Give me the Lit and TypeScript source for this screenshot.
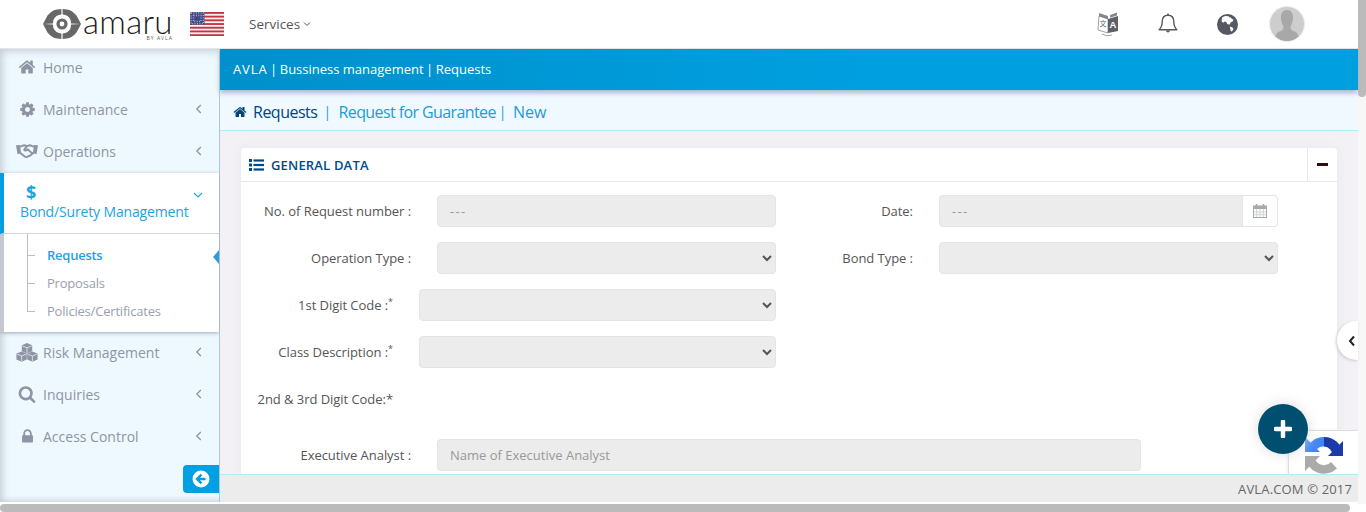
import { LitElement, html, css, svg } from "lit";
import { customElement } from "lit/decorators.js";

const FA = (d: string, size = 16) => html`<svg class="fa" width=${size} height=${size} viewBox="0 0 1792 1792"><path fill="currentColor" d=${d}></path></svg>`;
const HOME = "M1472 992v480q0 26-19 45t-45 19h-384v-384h-256v384h-384q-26 0-45-19t-19-45v-480q0-1 .5-3t.5-3l575-474 575 474q1 2 1 6zm223-69l-62 74q-8 9-21 11h-3q-13 0-21-7l-692-577-692 577q-12 8-24 7-13-2-21-11l-62-74q-8-10-7-23.5t11-21.5l719-599q32-26 76-26t76 26l244 204v-195q0-14 9-23t23-9h192q14 0 23 9t9 23v408l219 182q10 8 11 21.5t-7 23.5z";
const COG = "M1152 896q0-106-75-181t-181-75-181 75-75 181 75 181 181 75 181-75 75-181zm512-109v222q0 12-8 23t-20 13l-185 28q-19 54-39 91 35 50 107 138 10 12 10 25t-9 23q-27 37-99 108t-94 71q-12 0-26-9l-138-108q-44 23-91 38-16 136-29 186-7 28-36 28h-222q-14 0-24.5-8.5t-11.5-21.5l-28-184q-49-16-90-37l-141 107q-10 9-25 9-14 0-25-11-126-114-165-168-7-10-7-23 0-12 8-23 15-21 51-66.5t54-70.5q-27-50-41-99l-183-27q-13-2-21-12.5t-8-23.5v-222q0-12 8-23t19-13l186-28q14-46 39-92-40-57-107-138-10-12-10-24 0-10 9-23 26-36 98.5-107.5t94.5-71.5q13 0 26 10l138 107q44-23 91-38 16-136 29-186 7-28 36-28h222q14 0 24.5 8.5t11.5 21.5l28 184q49 16 90 37l142-107q9-9 24-9 13 0 25 10 129 119 165 170 7 8 7 22 0 12-8 23-15 21-51 66.5t-54 70.5q26 50 41 98l183 28q13 2 21 12.5t8 23.5z";
const SEARCH = "M1216 832q0-185-131.5-316.5t-316.5-131.5-316.5 131.5-131.5 316.5 131.5 316.5 316.5 131.5 316.5-131.5 131.5-316.5zm512 832q0 52-38 90t-90 38q-54 0-90-38l-343-342q-179 124-399 124-143 0-273.5-55.5t-225-150-150-225-55.5-273.5 55.5-273.5 150-225 225-150 273.5-55.5 273.5 55.5 225 150 150 225 55.5 273.5q0 220-124 399l343 343q37 37 37 90z";
const LOCK = "M640 768h512v-192q0-106-75-181t-181-75-181 75-75 181v192zm832 96v576q0 40-28 68t-68 28h-960q-40 0-68-28t-28-68v-576q0-40 28-68t68-28h32v-192q0-184 132-316t316-132 316 132 132 316v192h32q40 0 68 28t28 68z";

const handshake = html`<svg width="23" height="16" viewBox="0 0 23 16"><g fill="none" stroke="currentColor" stroke-width="2" stroke-linejoin="round" stroke-linecap="round"><path d="M4.5 3.5 L8.5 2 L11.5 3 L14.5 2 L18.5 3.5"/><path d="M4.5 10 L9.5 14 Q11.5 15 12.5 13.5 L14.5 13 L18 10"/><path d="M11.5 3 L8.5 6.8 Q10 8.5 12 6.2 L17 10.5"/></g><path fill="currentColor" d="M0 2 L4 1.6 L5.4 10 L1.6 11.4 Z M23 2 L19 1.6 L17.6 10 L21.4 11.4 Z"/></svg>`;
const cubes = html`<svg width="22" height="19" viewBox="0 0 22 19"><g fill="currentColor"><path d="M11 0 L16.2 2.2 V8.2 L11 10.4 L5.8 8.2 V2.2 Z"/><path d="M5.6 8.4 L10.8 10.6 V16.6 L5.6 18.8 L.4 16.6 V10.6 Z"/><path d="M16.4 8.4 L21.6 10.6 V16.6 L16.4 18.8 L11.2 16.6 V10.6 Z"/></g><g fill="none" stroke="#f0f9ff" stroke-width=".7"><path d="M6.2 2.8 L11 4.8 L15.8 2.8 M11 4.8V10"/><path d="M.8 11 L5.6 13 L10.4 11 M5.6 13V18.4"/><path d="M11.6 11 L16.4 13 L21.2 11 M16.4 13V18.4"/></g></svg>`;
const chevL = html`<svg class="chev" width="8" height="10" viewBox="0 0 8 10"><path d="M5.8 1 L1.8 5 L5.8 9" fill="none" stroke="currentColor" stroke-width="1.3"/></svg>`;
const chevD = html`<svg class="chev" width="10" height="8" viewBox="0 0 10 8"><path d="M1 2 L5 6 L9 2" fill="none" stroke="currentColor" stroke-width="1.1"/></svg>`;
const chevS = html`<svg class="chev" width="8" height="6" viewBox="0 0 8 6"><path d="M1 1.5 L4 4.5 L7 1.5" fill="none" stroke="currentColor" stroke-width="1"/></svg>`;

const flag = html`<svg width="34" height="24" viewBox="0 0 34 24"><rect width="34" height="24" rx="1.5" fill="#f4f1f2"/>${[0,1,2,3,4,5,6].map(i=>svg`<rect y=${i*3.7} width="34" height="1.85" fill="#c8323f"/>`)}<rect width="14.5" height="12.8" fill="#3f4a84"/><rect x="1" y="1" width="12.5" height="10.8" fill="none" stroke="#aab0cf" stroke-width="1.6" stroke-dasharray="1 1.4"/><rect x="3.5" y="3.5" width="7.5" height="6" fill="none" stroke="#aab0cf" stroke-width="1.4" stroke-dasharray="1 1.4"/></svg>`;

const logo = html`<svg width="38" height="30" viewBox="0 0 38 30"><path fill="#686868" fill-rule="evenodd" d="M0 15 L4.5 6.5 Q9 1 14 .4 L18.4 0 V5.4 Q12.6 5.8 10.4 11 L10 14.6 L0 15 L10 15.4 L10.4 19 Q12.6 24.2 18.4 24.6 V30 L14 29.6 Q9 29 4.5 23.5 Z M19.6 0 V5.4 Q25.4 5.8 27.6 11 L28 14.6 L38 15 L28 15.4 L27.6 19 Q25.4 24.2 19.6 24.6 V30 L24 29.6 Q29 29 33.5 23.5 L38 15 L33.5 6.5 Q29 1 24 .4 Z"/><circle cx="19" cy="15" r="4" fill="none" stroke="#686868" stroke-width="3.2"/></svg>`;

const translateIcon = html`<svg width="24" height="26" viewBox="0 0 24 26"><path d="M3 5 L12 8 V22 L2 19 Z" fill="#fff" stroke="#8a8a8a" stroke-width=".8"/><path d="M12 8 L22 5 V20 L12 22 Z" fill="#5e6066"/><path d="M12 8 L3 5 V2 L12 5 Z M14 4 L21 1.5 V4.6 L14 6.8 Z" fill="#5e6066" opacity=".75"/><text x="17" y="17" text-anchor="middle" font-size="9.5" font-weight="700" font-family="Liberation Sans" fill="#fff">A</text><text x="7" y="15" text-anchor="middle" font-size="7" font-family="Noto Sans CJK SC" fill="#666">文</text><path d="M6 23 Q11 26 16 24" fill="none" stroke="#8a8a8a" stroke-width=".8"/></svg>`;
const bell = html`<svg width="20" height="22" viewBox="0 0 20 22"><path d="M10 2.2 C6 2.2 4.2 5 4.2 8.6 C4.2 12.8 3.2 14.8 1.2 16.8 H18.8 C16.8 14.8 15.8 12.8 15.8 8.6 C15.8 5 14 2.2 10 2.2 Z" fill="#fff" stroke="#555860" stroke-width="1.4" stroke-linejoin="round"/><path d="M10 .5 V2.2" stroke="#555860" stroke-width="1.6"/><path d="M7.6 17.4 Q10 21.5 12.4 17.4 Z" fill="#555860"/></svg>`;
const globe = html`<svg width="21" height="21" viewBox="0 0 21 21"><circle cx="10.5" cy="10.5" r="10.5" fill="#555860"/><path fill="#fff" d="M5 3.6 L8 2 L11.6 2.2 L12.6 3.6 L14 3.4 L14.8 5 L16.6 5.4 L15.6 7.6 L13.6 8.6 L12.8 10.6 L10.4 10.2 L9.4 8.2 L7.6 7.4 L6.2 8.8 L4.6 7.4 Z M12.8 12.6 L15.6 13.4 L16.4 15.4 L14.8 17.6 L13.8 17 L13.2 14.8 Z"/></svg>`;
const avatar = html`<svg width="36" height="36" viewBox="0 0 36 36"><circle cx="18" cy="18" r="17.5" fill="#cdcdcd" stroke="#ececec" stroke-width="1"/><clipPath id="av"><circle cx="18" cy="18" r="17"/></clipPath><path clip-path="url(#av)" fill="#a8a8a8" d="M18 4 C13.4 4 11.8 8 12 12 C12.2 15.6 13.4 19 14.6 20.6 C14.8 23 13.6 24.4 10.4 25.6 C7.6 26.8 6 28.6 5.6 36 H30.4 C30 28.6 28.4 26.8 25.6 25.6 C22.4 24.4 21.2 23 21.4 20.6 C22.6 19 23.8 15.6 24 12 C24.2 8 22.6 4 18 4 Z"/></svg>`;
const recaptcha = html`<svg width="38" height="38" viewBox="0 0 38 38"><path d="M19 0 A19 19 0 0 1 38 17 L36.5 19 H27.5 A9 9 0 0 0 19 9.6 Z" fill="#1c3aa9"/><path d="M38 4 V19 H23 Z" fill="#1c3aa9"/><path d="M19 0 A19 19 0 0 0 0.4 15 L10.4 15 A9 9 0 0 1 19 9.6 Z" fill="#4285f4"/><path d="M0 0 L15 15 H0 Z" fill="#4285f4"/><path d="M0 19 H9.6 A9.4 9.4 0 0 0 26 25 L32 31.5 A19 19 0 0 1 0 19 Z" fill="#ababab"/><path d="M0 19 V34 L15 19 Z" fill="#ababab"/></svg>`;

type MenuItem = { label: string; icon: unknown; chev?: boolean };
const before: MenuItem[] = [
  { label: "Home", icon: FA(HOME, 18) },
  { label: "Maintenance", icon: FA(COG, 17), chev: true },
  { label: "Operations", icon: handshake, chev: true },
];
const after: MenuItem[] = [
  { label: "Risk Management", icon: cubes, chev: true },
  { label: "Inquiries", icon: FA(SEARCH, 18), chev: true },
  { label: "Access Control", icon: FA(LOCK, 17), chev: true },
];

@customElement("app-root")
export class AppRoot extends LitElement {
  static styles = css`
    :host { display: block; width: 1366px; height: 512px; overflow: hidden; background: #fff;
      font-family: "Open Sans", "Liberation Sans", sans-serif; font-size: 13px; color: #555; }
    * { box-sizing: border-box; }
    .fa { display: block; }
    .top { display: flex; height: 504px; }
    .page { width: 1358px; height: 502px; display: flex; flex-direction: column; }
    .vbar { width: 8px; background: #f7f7f7; }
    .vthumb { height: 97px; background: #bbb; border-radius: 0 0 4px 4px; }
    .hbar { height: 8px; background: #fff; }
    .hthumb { width: 1350px; height: 8px; background: #bbb; border-radius: 4px; }

    header { height: 49px; flex: none; display: flex; align-items: center; border-bottom: 1px solid #e6e6e6; background: #fff; padding-left: 43px; }
    .brand { display: flex; align-items: center; width: 147px; gap: 2px; }
    .word { position: relative; height: 38px; padding-top: 1px; }
    .amaru { display: block; font-family: "Lato", sans-serif; font-weight: 300; font-size: 33px; line-height: 31px; color: #1c1c1c; letter-spacing: .3px; }
    .by { display: block; text-align: right; font-size: 5px; line-height: 6px; letter-spacing: 1px; color: #555; margin-top: -2px; }
    .flag { display: flex; width: 59px; }
    .services { display: flex; align-items: center; gap: 3px; font-size: 13.5px; color: #555; font-weight: 500; }
    .tools { margin-left: auto; display: flex; align-items: center; }
    .tools > div { display: flex; justify-content: center; }
    .t1 { width: 24px; margin-right: 38px; }
    .t2 { width: 20px; margin-right: 39px; }
    .t3 { width: 21px; margin-right: 31px; }
    .t4 { width: 36px; margin-right: 53px; }

    .body { flex: 1; display: flex; min-height: 0; position: relative; }
    aside { width: 220px; flex: none; background: #eef9ff; box-shadow: inset 6px 6px 8px -4px #c3cbd4, inset -1px 0 0 #a9c9d8, inset 0 -5px 6px -4px #c3cbd4; display: flex; flex-direction: column; position: relative; }
    .item { height: 42px; display: flex; align-items: center; color: #8e94a3; font-size: 14px; padding: 0 17px 2px 16px; }
    .item:first-child { height: 40px; padding-bottom: 4px; }
    .ic { width: 27px; display: flex; justify-content: center; flex: none; padding-right: 5px; }
    .lbl { flex: 1; white-space: nowrap; }
    .chev { display: block; flex: none; }
    .active-block { background: #fff; box-shadow: 0 1px 4px #9fa8b4; margin-right: 1px; border-left: 4px solid #c5c8d0; }
    .active-head { height: 61px; background: #fff; margin-left: -4px; border-left: 4px solid #00a0e3; border-bottom: 1px solid #d4d4d8; padding: 10px 16px 0 16px; position: relative; color: #1ba3e3; font-size: 14px; letter-spacing: -.15px; }
    .dollar { font-weight: 700; font-size: 18px; line-height: 18px; width: 22px; text-align: center; }
    .bond { line-height: 20px; margin-top: 1px; white-space: nowrap; }
    .active-head .chev { position: absolute; right: 16px; top: 18px; }
    .sub { height: 98px; position: relative; padding: 7px 0 0 23px; }
    .tree { width: 8px; height: 78px; border-left: 1px solid #b9bcc4; position: absolute; left: 23px; top: 0; }
    .tick { position: absolute; left: 0; width: 7px; height: 1px; background: #b9bcc4; }
    .sub-item { height: 28px; line-height: 28px; padding-left: 20px; color: #9a9fac; font-weight: 500; font-size: 13px; letter-spacing: -.2px; white-space: nowrap; }
    .sub-item.on { color: #1ba3e3; font-weight: 600; letter-spacing: -.25px; }
    .arrow { position: absolute; right: 0; top: 16px; width: 0; height: 0; border: 7px solid transparent; border-right: 6px solid #2e9cd8; border-left: 0; }
    .collapse { position: absolute; right: 1px; top: 416px; width: 36px; height: 28px; background: #00a0e3; border-radius: 4px 0 0 4px; display: flex; align-items: center; justify-content: center; }

    main { flex: 1; min-width: 0; display: flex; flex-direction: column; position: relative; }
    .bluebar { height: 41px; flex: none; background: linear-gradient(100deg, #0090cc, #00a0e0 60%); color: #fff; font-size: 13px; display: flex; align-items: center; padding: 0 0 2px 13px; box-shadow: 0 3px 5px #a5b9cc; position: relative; z-index: 2; white-space: nowrap; }
    .avla { letter-spacing: .9px; }
    .bsep { margin: 0 2.5px; }
    .crumbs { height: 41px; flex: none; background: #f0f9ff; border-bottom: 1px solid #b9e6f9; display: flex; align-items: center; padding: 3px 0 0 13px; font-size: 16px; letter-spacing: -.6px; color: #1b9cd8; white-space: nowrap; }
    .crumbs .home { color: #00447c; margin-right: 6px; }
    .crumbs .root { color: #00447c; letter-spacing: -.5px; }
    .crumbs .new { letter-spacing: 0; }
    .csep { font-size: 14px; margin: 0 8px 0 6px; }
    .csep.b { margin: 0 7px 0 3px; }
    .content { flex: 1; min-height: 0; background: #f3f1f5; padding: 17px 21px 0; overflow: hidden; position: relative; }
    .card { background: #fff; border-radius: 4px 4px 0 0; height: 400px; box-shadow: 0 0 10px #e9e6ea; }
    .card-head { height: 34px; display: flex; align-items: center; border-bottom: 1px solid #e8e8e8; padding-left: 8px; color: #004a8c; font-weight: 600; font-size: 13px; letter-spacing: .18px; }
    .list { margin-right: 7px; display: block; }
    .minus { margin-left: auto; width: 30px; height: 33px; border-left: 1px solid #e6e6e6; display: flex; align-items: center; justify-content: center; }
    .minus span { width: 11px; height: 3px; background: #3a0a0a; display: block; }
    .form { padding-top: 13px; }
    .row { display: flex; align-items: center; height: 32px; margin-bottom: 15px; }
    .row.far { margin-bottom: 24px; }
    label { text-align: right; flex: none; font-size: 13px; letter-spacing: -.05px; color: #555; white-space: nowrap; }
    .l170 { width: 170px; margin-right: 26px; }
    .l152 { width: 152px; margin-right: 26px; }
    .l137 { width: 137px; margin-right: 26px; }
    sup { font-size: 9px; line-height: 0; }
    input, select { height: 32px; background: #ececec; border: 1px solid #e4e4e4; border-radius: 4px; font: inherit; font-size: 13px; color: #777; padding: 0 12px; outline: none; flex: none; }
    input::placeholder { color: #999; opacity: 1; }
    input.dash { letter-spacing: 1.3px; }
    select { color: #555; padding: 0 8px; }
    .w339 { width: 339px; }
    .w357 { width: 357px; }
    .w704 { width: 704px; }
    .date { display: flex; width: 339px; flex: none; }
    .date input { width: 304px; border-radius: 4px 0 0 4px; }
    .addon { width: 35px; height: 32px; border: 1px solid #e4e4e4; border-left: 0; border-radius: 0 4px 4px 0; background: #fff; display: flex; align-items: center; justify-content: center; }
    .recap { position: absolute; right: 0; top: 299px; width: 70px; height: 60px; background: #fff; border: 1px solid #dcdcdc; border-right: 0; padding: 6px 0 0 16px; box-shadow: -1px 0 3px #eee; }
    .tab { position: absolute; right: 0; top: 272px; width: 21px; height: 39px; background: #fff; border-radius: 20px 0 0 20px; box-shadow: -1px 1px 3px #ccc; display: flex; align-items: center; justify-content: flex-end; padding-right: 2px; color: #222; z-index: 3; }
    .fab { position: absolute; left: 1038px; top: 355px; width: 50px; height: 50px; border-radius: 50%; background: #004f71; z-index: 3; display: flex; align-items: center; justify-content: center; box-shadow: 0 0 14px #ddd; }
    footer { height: 28px; flex: none; background: #ececec; border-top: 1px solid #b9e6f9; display: flex; align-items: center; justify-content: flex-end; padding-right: 6px; font-size: 13px; letter-spacing: .15px; color: #666; position: relative; z-index: 2; }
  `;

  private item(m: MenuItem) {
    return html`<div class="item"><span class="ic">${m.icon}</span><span class="lbl">${m.label}</span>${m.chev ? chevL : ""}</div>`;
  }

  render() {
    return html`
      <div class="top">
        <div class="page">
          <header>
            <div class="brand">${logo}<div class="word"><span class="amaru">amaru</span><span class="by">BY AVLA</span></div></div>
            <div class="flag">${flag}</div>
            <div class="services">Services ${chevS}</div>
            <div class="tools">
              <div class="t1">${translateIcon}</div>
              <div class="t2">${bell}</div>
              <div class="t3">${globe}</div>
              <div class="t4">${avatar}</div>
            </div>
          </header>
          <div class="body">
            <aside>
              ${before.map((m) => this.item(m))}
              <div class="active-block">
                <div class="active-head">
                  <div class="dollar">$</div>
                  <div class="bond">Bond/Surety Management</div>
                  ${chevD}
                </div>
                <div class="sub">
                  <div class="tree">
                    <i class="tick" style="top:21px"></i><i class="tick" style="top:49px"></i><i class="tick" style="top:77px"></i>
                  </div>
                  <div class="sub-item on">Requests</div>
                  <div class="sub-item">Proposals</div>
                  <div class="sub-item">Policies/Certificates</div>
                  <div class="arrow"></div>
                </div>
              </div>
              ${after.map((m) => this.item(m))}
              <div class="collapse"><svg width="18" height="18" viewBox="0 0 18 18"><circle cx="9" cy="9" r="8.5" fill="#fff"/><path d="M9.5 4.6 L5 9 L9.5 13.4 M5.2 9 H13.5" fill="none" stroke="#00a0e3" stroke-width="2.4"/></svg></div>
            </aside>
            <main>
              <div class="bluebar"><span class="avla">AVLA</span><span class="bsep">|</span><span>Bussiness management</span><span class="bsep">|</span><span>Requests</span></div>
              <div class="crumbs"><span class="home">${FA(HOME, 14)}</span><span class="root">Requests</span><span class="csep">|</span><span>Request for Guarantee</span><span class="csep b">|</span><span class="new">New</span></div>
              <div class="content">
                <div class="card">
                  <div class="card-head">
                    <svg class="list" width="15" height="12" viewBox="0 0 15 12"><g fill="#004a8c"><rect y="0" width="3" height="3"/><rect y="4.5" width="3" height="3"/><rect y="9" width="3" height="3"/><rect x="4.5" y=".4" width="10.5" height="2.2"/><rect x="4.5" y="4.9" width="10.5" height="2.2"/><rect x="4.5" y="9.4" width="10.5" height="2.2"/></g></svg>
                    GENERAL DATA
                    <div class="minus"><span></span></div>
                  </div>
                  <div class="form">
                    <div class="row">
                      <label class="l170">No. of Request number :</label><input class="w339 dash" placeholder="---" />
                      <label class="l137">Date:</label>
                      <div class="date"><input class="dash" placeholder="---" /><div class="addon">
                        <svg width="14" height="14" viewBox="0 0 14 14"><rect x=".5" y="2" width="13" height="11.5" fill="#fff" stroke="#a9a9a9"/><rect x=".5" y="2" width="13" height="3" fill="#a9a9a9"/><path d="M3.5 0v3M10.5 0v3" stroke="#a9a9a9" stroke-width="1.6"/><path d="M.5 8h13M.5 10.7h13M3.7 5v8M7 5v8M10.3 5v8" stroke="#c3c9d2" stroke-width=".8"/></svg>
                      </div></div>
                    </div>
                    <div class="row">
                      <label class="l170">Operation Type :</label><select class="w339"><option></option></select>
                      <label class="l137">Bond Type :</label><select class="w339"><option></option></select>
                    </div>
                    <div class="row"><label class="l152">1st Digit Code :<sup>*</sup></label><select class="w357"><option></option></select></div>
                    <div class="row"><label class="l152">Class Description :<sup>*</sup></label><select class="w357"><option></option></select></div>
                    <div class="row far"><label class="l152">2nd &amp; 3rd Digit Code:*</label></div>
                    <div class="row"><label class="l170">Executive Analyst :</label><input class="w704" placeholder="Name of Executive Analyst" /></div>
                  </div>
                </div>
                <div class="recap">${recaptcha}</div>
              </div>
              <div class="tab"><svg width="8" height="12" viewBox="0 0 8 12"><path d="M6 1.5 L2 6 L6 10.5" fill="none" stroke="#222" stroke-width="2"/></svg></div>
              <div class="fab"><svg width="18" height="18" viewBox="0 0 18 18"><path d="M9 1.5 V16.5 M1.5 9 H16.5" stroke="#fff" stroke-width="4.4" stroke-linecap="round"/></svg></div>
              <footer>AVLA.COM © 2017</footer>
            </main>
          </div>
        </div>
        <div class="vbar"><div class="vthumb"></div></div>
      </div>
      <div class="hbar"><div class="hthumb"></div></div>
    `;
  }
}
